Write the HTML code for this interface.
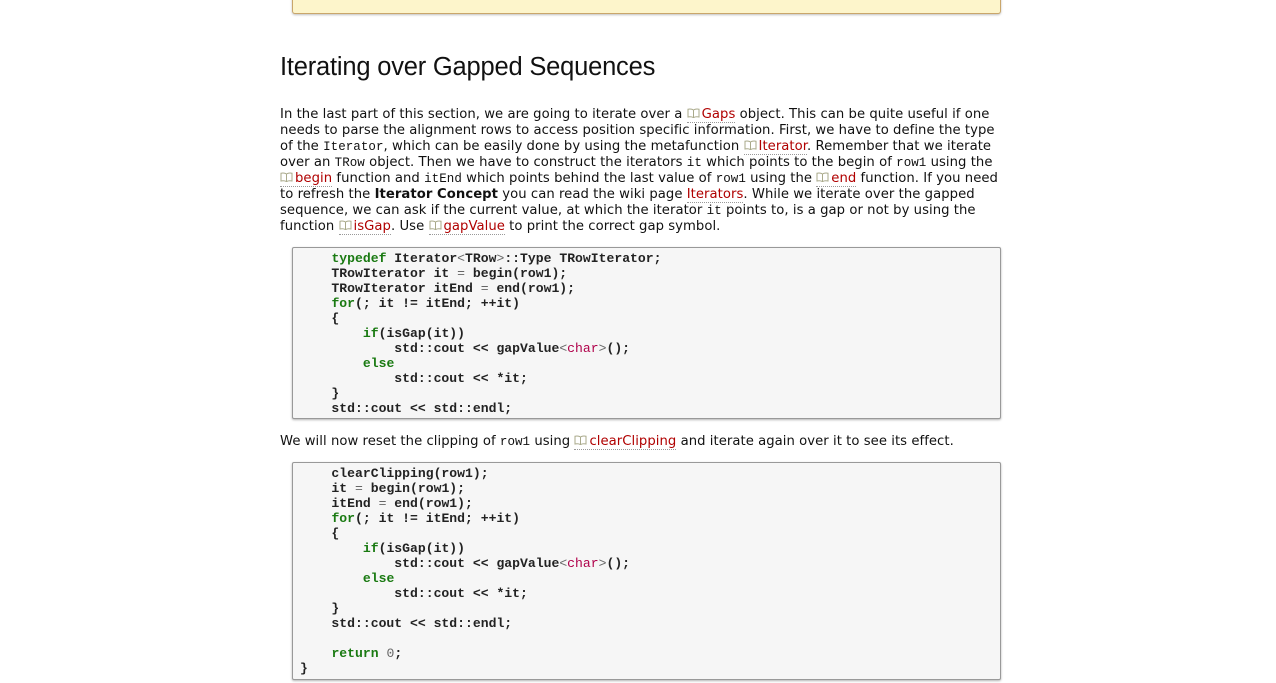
<!DOCTYPE html>
<html><head><meta charset="utf-8"><style>
body{margin:0;background:#fff;width:1276px;height:683px;overflow:hidden;position:relative;font-family:"DejaVu Sans","Liberation Sans",sans-serif;color:#111}
.note{position:absolute;left:292px;top:-10px;width:707px;height:23px;background:#fdf5cb;border:1px solid #c9a66b;border-top:none;border-radius:0 0 3px 3px;box-shadow:0 1px 2px rgba(0,0,0,.25)}
h1{position:absolute;left:280px;top:53px;margin:0;font-family:"Liberation Sans",sans-serif;font-weight:normal;font-size:25.5px;color:#111;letter-spacing:-0.2px}
.p{position:absolute;left:280px;font-size:13.2px;line-height:16px;white-space:nowrap;letter-spacing:0.05px}
.p *{line-height:1}
code{font-family:"Liberation Mono",monospace;font-size:12.5px}
a{color:#b00000;text-decoration:none;border-bottom:1px dotted #999}
.bk{display:inline-block;width:13px;height:10px;vertical-align:0px;margin-right:2px}
.box{position:absolute;left:292px;width:707px;background:#f6f6f6;border:1px solid #999;border-radius:2px;box-shadow:0 1px 2px rgba(0,0,0,.3)}
pre{margin:0;position:absolute;left:7px;font-family:"Liberation Mono",monospace;font-weight:bold;font-size:13.1px;line-height:15px;color:#222}
.k{color:#1a7a12}.s{color:#b0004a;font-weight:normal}.n{font-weight:normal;color:#666}
</style></head><body>
<div class="note"></div>
<h1>Iterating over Gapped Sequences</h1>
<svg width="0" height="0" style="position:absolute"><defs><symbol id="b" viewBox="0 0 13 10"><path d="M6.5 2 C5 1,3 0.8,1 1.2 V9 C3 8.6,5 8.8,6.5 9.6 C8 8.8,10 8.6,12 9 V1.2 C10 0.8,8 1,6.5 2 Z M6.5 2 V9.6" fill="none" stroke="#a9a98a" stroke-width="1"/></symbol></defs></svg>
<div class="p" style="top:107px">
In the last part of this section, we are going to iterate over a <a><svg class="bk"><use href="#b"/></svg>Gaps</a> object. This can be quite useful if one<br>
needs to parse the alignment rows to access position specific information. First, we have to define the type<br>
of the <code>Iterator</code>, which can be easily done by using the metafunction <a><svg class="bk"><use href="#b"/></svg>Iterator</a>. Remember that we iterate<br>
over an <code>TRow</code> object. Then we have to construct the iterators <code>it</code> which points to the begin of <code>row1</code> using the<br>
<a><svg class="bk"><use href="#b"/></svg>begin</a> function and <code>itEnd</code> which points behind the last value of <code>row1</code> using the <a><svg class="bk"><use href="#b"/></svg>end</a> function. If you need<br>
to refresh the <b>Iterator Concept</b> you can read the wiki page <a>Iterators</a>. While we iterate over the gapped<br>
sequence, we can ask if the current value, at which the iterator <code>it</code> points to, is a gap or not by using the<br>
function <a><svg class="bk"><use href="#b"/></svg>isGap</a>. Use <a><svg class="bk"><use href="#b"/></svg>gapValue</a> to print the correct gap symbol.
</div>
<div class="box" style="top:247px;height:170px"><pre style="top:3px">    <span class="k">typedef</span> Iterator<span class="n">&lt;</span>TRow<span class="n">&gt;</span>::Type TRowIterator;
    TRowIterator it <span class="n">=</span> begin(row1);
    TRowIterator itEnd <span class="n">=</span> end(row1);
    <span class="k">for</span>(; it != itEnd; ++it)
    {
        <span class="k">if</span>(isGap(it))
            std::cout &lt;&lt; gapValue<span class="n">&lt;</span><span class="s">char</span><span class="n">&gt;</span>();
        <span class="k">else</span>
            std::cout &lt;&lt; *it;
    }
    std::cout &lt;&lt; std::endl;</pre></div>
<div class="p" style="top:434px">We will now reset the clipping of <code>row1</code> using <a><svg class="bk"><use href="#b"/></svg>clearClipping</a> and iterate again over it to see its effect.</div>
<div class="box" style="top:462px;height:216px"><pre style="top:3px">    clearClipping(row1);
    it <span class="n">=</span> begin(row1);
    itEnd <span class="n">=</span> end(row1);
    <span class="k">for</span>(; it != itEnd; ++it)
    {
        <span class="k">if</span>(isGap(it))
            std::cout &lt;&lt; gapValue<span class="n">&lt;</span><span class="s">char</span><span class="n">&gt;</span>();
        <span class="k">else</span>
            std::cout &lt;&lt; *it;
    }
    std::cout &lt;&lt; std::endl;

    <span class="k">return</span> <span class="n">0</span>;
}</pre></div>
</body></html>
